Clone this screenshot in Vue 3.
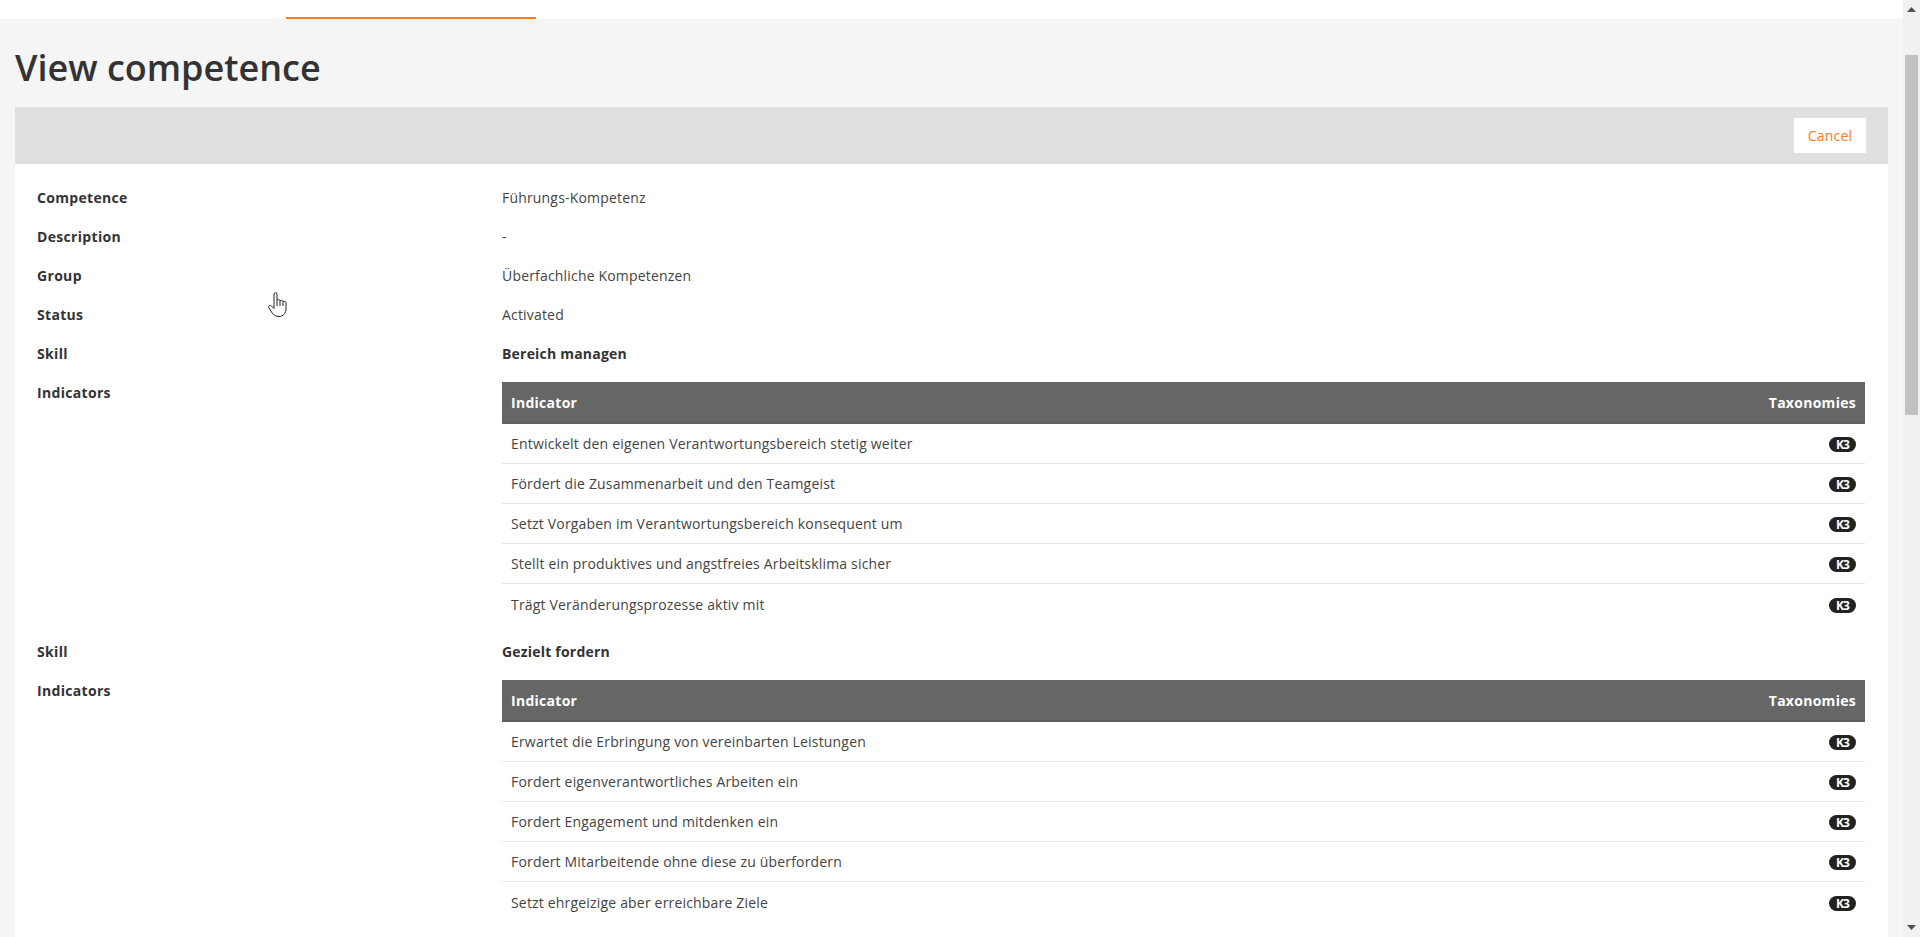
<script setup>
const fields = [
  { label: 'Competence', value: 'Führungs-Kompetenz' },
  { label: 'Description', value: '-' },
  { label: 'Group', value: 'Überfachliche Kompetenzen' },
  { label: 'Status', value: 'Activated' },
]
const skills = [
  {
    name: 'Bereich managen',
    items: [
      'Entwickelt den eigenen Verantwortungsbereich stetig weiter',
      'Fördert die Zusammenarbeit und den Teamgeist',
      'Setzt Vorgaben im Verantwortungsbereich konsequent um',
      'Stellt ein produktives und angstfreies Arbeitsklima sicher',
      'Trägt Veränderungsprozesse aktiv mit',
    ],
  },
  {
    name: 'Gezielt fordern',
    items: [
      'Erwartet die Erbringung von vereinbarten Leistungen',
      'Fordert eigenverantwortliches Arbeiten ein',
      'Fordert Engagement und mitdenken ein',
      'Fordert Mitarbeitende ohne diese zu überfordern',
      'Setzt ehrgeizige aber erreichbare Ziele',
    ],
  },
]
</script>

<template>
  <div class="screen">
    <div class="main">
      <div class="topbar"><div class="tab"></div></div>
      <div class="content">
        <h1 class="title">View competence</h1>
        <div class="toolbar"><button class="cancel">Cancel</button></div>
        <div class="panel">
          <div v-for="f in fields" :key="f.label" class="row">
            <div class="label">{{ f.label }}</div>
            <div class="value">{{ f.value }}</div>
          </div>
          <template v-for="s in skills" :key="s.name">
            <div class="row">
              <div class="label">Skill</div>
              <div class="value strong">{{ s.name }}</div>
            </div>
            <div class="row">
              <div class="label">Indicators</div>
              <div class="tablewrap">
                <div class="thead">
                  <span>Indicator</span>
                  <span>Taxonomies</span>
                </div>
                <div v-for="i in s.items" :key="i" class="trow">
                  <span>{{ i }}</span>
                  <span class="badge">K3</span>
                </div>
              </div>
            </div>
          </template>
        </div>
      </div>
    </div>
    <div class="scrollbar">
      <svg class="arrow" width="9" height="5" viewBox="0 0 9 5"><path d="M4.5 0 9 5H0z" fill="#505050" /></svg>
      <div class="thumb"></div>
      <svg class="arrow down" width="9" height="5" viewBox="0 0 9 5"><path d="M0 0h9L4.500 5z" fill="#505050" /></svg>
    </div>
    <svg class="cursor" width="19" height="25" viewBox="0 0 19 25">
      <path d="M6 2C6 .2 9 .2 9 2v6.500c0-1.200 3-1.200 3 0v.7c0-1.200 3-1.200 3 0v.8c0-1.100 3-.9 3 .3v6.700c0 4-2.800 7.500-7 7.500-3 0-5-1.100-6.800-3.500L1 16c-1.200-2 1-3.400 2.500-2L6 16.500z" fill="#fff" stroke="#26262c" stroke-width="1" stroke-linejoin="round" />
      <path d="M9 8.500V14M12 9.200V14M15 10v4" stroke="#26262c" stroke-width="1" fill="none" />
    </svg>
  </div>
</template>

<style scoped>
.screen {
  position: relative;
  display: flex;
  width: 1920px;
  height: 937px;
  overflow: hidden;
  font-family: "Open Sans", sans-serif;
  font-size: 14px;
  letter-spacing: 0.18px;
  color: #333;
}
.main {
  flex: 1;
  min-width: 0;
  background: #f5f5f5;
}
.topbar {
  height: 19px;
  background: #fff;
  padding-left: 286px;
}
.tab {
  width: 250px;
  height: 17px;
  border-bottom: 2px solid #f97a1f;
}
.content {
  padding: 0 15px;
}
.title {
  margin: 0;
  height: 88px;
  padding-top: 10px;
  box-sizing: border-box;
  font-size: 36px;
  font-weight: 600;
  line-height: 78px;
  letter-spacing: 0;
  color: #333;
}
.toolbar {
  display: flex;
  justify-content: flex-end;
  height: 57px;
  padding: 11px 22px 0 0;
  background: #e0e0e0;
  box-sizing: border-box;
}
.cancel {
  width: 72px;
  height: 35px;
  padding: 0;
  border: 0;
  background: #fff;
  color: #f97a1f;
  font: inherit;
  letter-spacing: inherit;
}
.panel {
  background: #fff;
  padding: 14px 23px 0 22px;
  height: 800px;
  box-sizing: border-box;
}
.row {
  display: grid;
  grid-template-columns: 465px 1fr;
  min-height: 39px;
  line-height: 39px;
}
.label {
  font-weight: 700;
  letter-spacing: 0.32px;
  color: #333;
}
.value {
  color: #444;
}
.value.strong {
  font-weight: 700;
  letter-spacing: 0.2px;
  color: #333;
}
.tablewrap {
  margin: 9px 0 8px;
  line-height: 19px;
  color: #444;
}
.thead {
  display: flex;
  justify-content: space-between;
  align-items: center;
  height: 42px;
  padding: 0 9px;
  box-sizing: border-box;
  background: #666;
  border-bottom: 2px solid #5f5f5f;
  color: #fff;
  font-weight: 700;
  letter-spacing: 0.28px;
}
.trow {
  display: flex;
  justify-content: space-between;
  align-items: center;
  height: 40px;
  padding: 0 9px;
  box-sizing: border-box;
  border-bottom: 1px solid #e6e6e6;
}
.trow:last-child {
  border-bottom: 0;
}
.badge {
  width: 27px;
  height: 15px;
  margin-top: 2px;
  border-radius: 8px;
  background: #222;
  color: #fff;
  font-size: 12px;
  font-weight: 700;
  letter-spacing: -1px;
  line-height: 15px;
  text-align: center;
}
.scrollbar {
  position: relative;
  width: 17px;
  background: #f1f1f1;
}
.arrow {
  position: absolute;
  left: 4px;
  top: 7px;
}
.arrow.down {
  top: auto;
  bottom: 7px;
}
.thumb {
  position: absolute;
  top: 55px;
  left: 2px;
  width: 13px;
  height: 360px;
  background: #c1c1c1;
}
.cursor {
  position: absolute;
  left: 268px;
  top: 292px;
}
</style>
